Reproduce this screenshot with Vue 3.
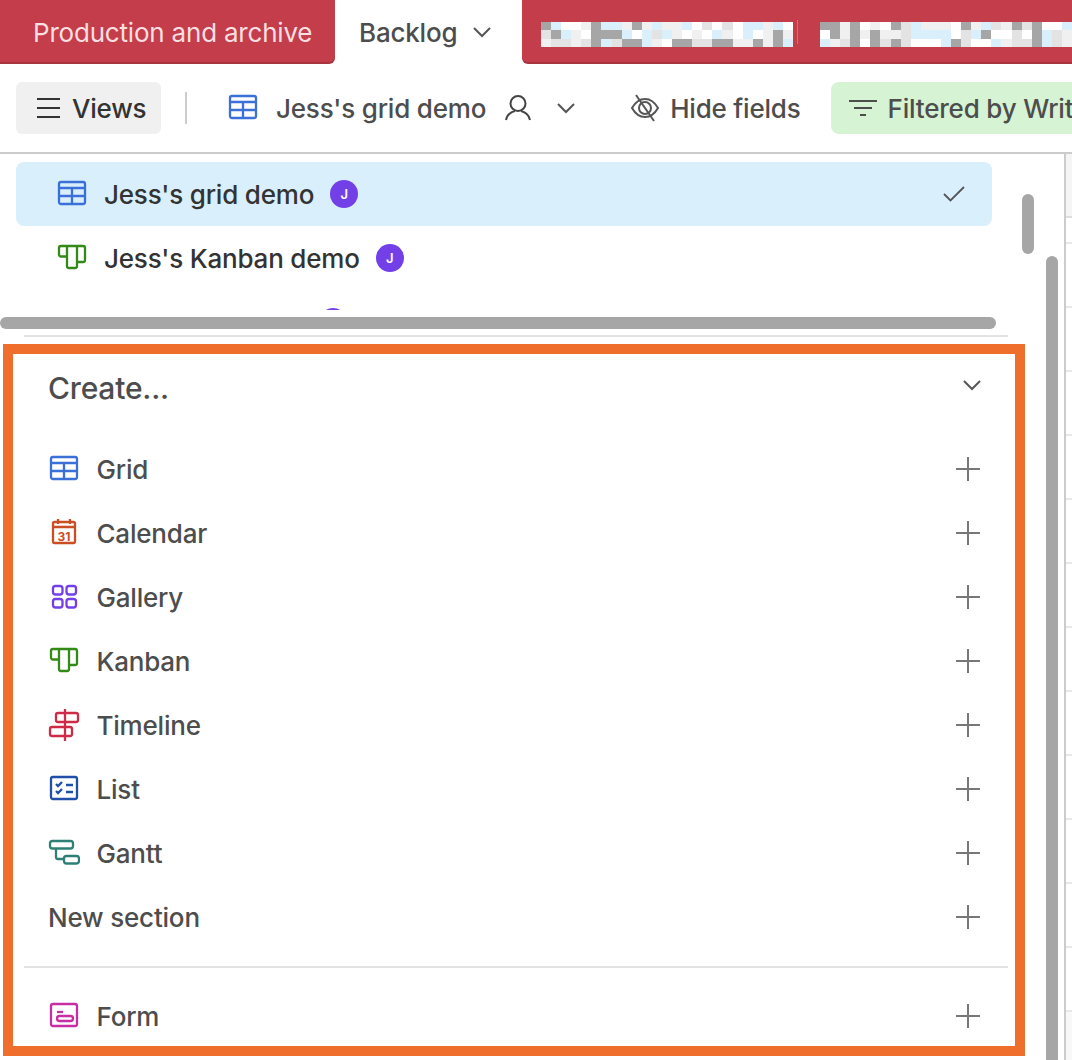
<script setup>
const blocks = [
  ['gbwwlgbblglbllbwmwmwbblbw', 'mgblwgggbwbmblwlwblwbwlgl', 'lmmlmgbmggblwggmmggllglgb'],
  ['gglgwlwgmblllwglbmlgmgwwb', 'wglglgllmbbbbwmbgwwmwgbml', 'blmgwgmgmwwwbgmwwblmmgbml'],
]

const views = [
  { name: "Jess's grid demo", icon: 'grid', color: '#3b70d8', selected: true },
  { name: "Jess's Kanban demo", icon: 'kanban', color: '#338a17' },
]

const createItems = [
  { name: 'Grid', icon: 'grid', color: '#3b70d8' },
  { name: 'Calendar', icon: 'calendar', color: '#cb4d24' },
  { name: 'Gallery', icon: 'gallery', color: '#7340e8' },
  { name: 'Kanban', icon: 'kanban', color: '#338a17' },
  { name: 'Timeline', icon: 'timeline', color: '#cf2a46' },
  { name: 'List', icon: 'list', color: '#1f4fa8' },
  { name: 'Gantt', icon: 'gantt', color: '#2e8077' },
  { name: 'New section' },
]

const gridRows = 12
</script>

<template>
  <div class="page">
    <svg class="sprites" aria-hidden="true">
      <symbol id="i-grid" viewBox="0 0 32 32">
        <g fill="none" stroke="currentColor" stroke-width="2.3">
          <rect x="3" y="4" width="26" height="22" rx="2" />
          <path d="M3 10H29M3 18H29M16 10V26" />
        </g>
      </symbol>
      <symbol id="i-calendar" viewBox="0 0 32 32">
        <g fill="none" stroke="currentColor" stroke-width="2.3">
          <rect x="5" y="5" width="22" height="21" rx="1.5" />
          <path d="M5 10H27M10 2V7M22 2V7" />
        </g>
      </symbol>
      <symbol id="i-gallery" viewBox="0 0 32 32">
        <g fill="none" stroke="currentColor" stroke-width="2.3">
          <rect x="5" y="5" width="9.5" height="8.5" rx="2.5" />
          <rect x="18.5" y="5" width="9.5" height="8.5" rx="2.5" />
          <rect x="5" y="18" width="9.5" height="8.5" rx="2.5" />
          <rect x="18.5" y="18" width="9.5" height="8.5" rx="2.5" />
        </g>
      </symbol>
      <symbol id="i-kanban" viewBox="0 0 32 32">
        <path
          fill="none"
          stroke="currentColor"
          stroke-width="2.3"
          d="M5 4H27a2 2 0 0 1 2 2V18a2 2 0 0 1-2 2H21M21 4V24a2 2 0 0 1-2 2H13a2 2 0 0 1-2-2V4M11 14.5H5a2 2 0 0 1-2-2V6a2 2 0 0 1 2-2"
        />
      </symbol>
      <symbol id="i-timeline" viewBox="0 0 32 32">
        <g fill="none" stroke="currentColor" stroke-width="2.3">
          <rect x="8" y="4" width="22" height="9" rx="2" />
          <rect x="2" y="18" width="22" height="9" rx="2" />
          <path d="M17 0V32" />
        </g>
      </symbol>
      <symbol id="i-list" viewBox="0 0 32 32">
        <g fill="none" stroke="currentColor" stroke-width="2.3">
          <rect x="3" y="4" width="26" height="22" rx="2" />
          <path d="M8 11l2 2 4-4M8 18l2 2 4-4M18 12H25M18 19H25" />
        </g>
      </symbol>
      <symbol id="i-gantt" viewBox="0 0 32 32">
        <g fill="none" stroke="currentColor" stroke-width="2.3">
          <rect x="2" y="4" width="23" height="7.5" rx="2.5" />
          <rect x="16" y="19" width="15" height="7.5" rx="2.5" />
          <path d="M8 12V20a2 2 0 0 0 2 2H16" />
        </g>
      </symbol>
      <symbol id="i-form" viewBox="0 0 32 32">
        <g fill="none" stroke="currentColor" stroke-width="2.3">
          <rect x="3" y="4" width="26" height="22" rx="2" />
          <path d="M9 12H15" />
          <rect x="9" y="16" width="16" height="5" rx="2.5" />
        </g>
      </symbol>
      <symbol id="i-chevron" viewBox="0 0 20 20">
        <path fill="none" stroke="currentColor" stroke-width="2" d="M2 6L10 14L18 6" />
      </symbol>
      <symbol id="i-plus" viewBox="0 0 24 24">
        <path fill="none" stroke="currentColor" stroke-width="2" d="M12 0V24M0 12H24" />
      </symbol>
    </svg>

    <header class="tabs">
      <div class="tabs-left">
        <span class="tab-name">Production and archive</span>
      </div>
      <div class="tab-active">
        <span>Backlog</span>
        <svg class="chevron"><use href="#i-chevron" /></svg>
      </div>
      <div class="tabs-right">
        <template v-for="(block, b) in blocks" :key="b">
          <div class="pixels">
            <template v-for="(row, r) in block" :key="r">
              <i v-for="(cell, c) in row" :key="c" :class="'px-' + cell"></i>
            </template>
          </div>
          <div v-if="b === 0" class="tab-sep"></div>
        </template>
      </div>
    </header>

    <div class="toolbar">
      <button class="views-btn">
        <svg class="menu-icon" viewBox="0 0 24 20">
          <path fill="none" stroke="currentColor" stroke-width="2" d="M1 1H24M1 10H24M1 19H24" />
        </svg>
        Views
      </button>
      <div class="divider"></div>
      <svg class="icon view-icon"><use href="#i-grid" /></svg>
      <span class="view-title">Jess's grid demo</span>
      <svg class="icon person" viewBox="0 0 32 32">
        <g fill="none" stroke="currentColor" stroke-width="2">
          <circle cx="16" cy="11.5" r="7.5" />
          <path d="M4 28c1-5 5-8 9-9M28 28c-1-5-5-8-9-9" />
        </g>
      </svg>
      <svg class="chevron toolbar-chevron"><use href="#i-chevron" /></svg>
      <svg class="icon hide-icon" viewBox="0 0 32 32">
        <g fill="none" stroke="currentColor" stroke-width="2">
          <path d="M3 16C7 9 11 7 16 7s9 2 13 9c-4 7-8 9-13 9s-9-2-13-9z" />
          <circle cx="16" cy="16" r="6" />
          <path d="M7 3L25 29" />
        </g>
      </svg>
      <span class="hide-label">Hide fields</span>
      <div class="filter-btn">
        <svg class="icon filter-icon" viewBox="0 0 32 32">
          <path fill="none" stroke="currentColor" stroke-width="2" d="M2 9H30M7 16H25M13 23H19" />
        </svg>
        Filtered by Writer
      </div>
    </div>

    <div class="body">
      <aside class="panel">
        <div class="view-list">
          <div v-for="view in views" :key="view.name" class="view-row" :class="{ selected: view.selected }">
            <svg class="icon" :style="{ color: view.color }"><use :href="'#i-' + view.icon" /></svg>
            <span class="view-name">{{ view.name }}</span>
            <span class="avatar">J</span>
            <svg v-if="view.selected" class="check" viewBox="0 0 22 16">
              <path fill="none" stroke="currentColor" stroke-width="1.8" d="M1 8L7.5 14.5L21 1" />
            </svg>
          </div>
          <div class="view-row clipped-row">
            <span class="avatar">J</span>
          </div>
        </div>

        <div class="sep top-sep"></div>

        <section class="create-box">
          <div class="create-head">
            <span class="create-title">Create...</span>
            <svg class="chevron"><use href="#i-chevron" /></svg>
          </div>
          <div v-for="item in createItems" :key="item.name" class="create-row">
            <svg v-if="item.icon" class="icon" viewBox="0 0 32 32" :style="{ color: item.color }">
              <use :href="'#i-' + item.icon" width="32" height="32" />
              <text v-if="item.icon === 'calendar'" x="16" y="23.5" class="cal-day" fill="currentColor" text-anchor="middle">31</text>
            </svg>
            <span class="create-name" :class="{ bare: !item.icon }">{{ item.name }}</span>
            <svg class="plus"><use href="#i-plus" /></svg>
          </div>
          <div class="sep box-sep"></div>
          <div class="create-row">
            <svg class="icon form-icon"><use href="#i-form" /></svg>
            <span class="create-name">Form</span>
            <svg class="plus"><use href="#i-plus" /></svg>
          </div>
        </section>
      </aside>

      <div class="grid-edge">
        <div class="grid-head"></div>
        <div class="grid-first"></div>
        <div v-for="n in gridRows" :key="n" class="grid-row"></div>
        <div class="grid-foot"></div>
      </div>

      <div class="scroll-h"></div>
      <div class="scroll-v-small"></div>
      <div class="scroll-v-big"></div>
    </div>
  </div>
</template>

<style>
html,
body {
  margin: 0;
  background: #fff;
}
</style>

<style scoped>
.page {
  position: relative;
  width: 1072px;
  height: 1060px;
  overflow: hidden;
  display: flex;
  flex-direction: column;
  background: #fff;
  font-family: Inter, "Liberation Sans", sans-serif;
  font-size: 26px;
  letter-spacing: -0.2px;
  color: #4d4d4d;
}

.sprites {
  position: absolute;
  width: 0;
  height: 0;
}

.cal-day {
  font-family: Inter, sans-serif;
  font-size: 12px;
  font-weight: 700;
  letter-spacing: 0;
}

.icon {
  width: 32px;
  height: 32px;
  flex-shrink: 0;
}

.chevron {
  width: 20px;
  height: 20px;
  flex-shrink: 0;
  color: #555;
}

.tabs {
  display: flex;
  height: 64px;
  flex-shrink: 0;
}

.tabs-left,
.tabs-right {
  background: #c43d4a;
  box-shadow: inset 0 -2px 0 rgba(0, 0, 0, 0.14);
  display: flex;
  align-items: center;
}

.tabs-left {
  width: 335px;
  padding-left: 33px;
  box-sizing: border-box;
  border-bottom-right-radius: 6px;
}

.tab-name {
  color: #f8dfe1;
}

.tab-active {
  width: 187px;
  padding-left: 24px;
  box-sizing: border-box;
  display: flex;
  align-items: center;
  gap: 15px;
  font-weight: 500;
  border-radius: 8px 8px 0 0;
}

.tabs-right {
  flex: 1;
  padding-left: 19px;
  padding-top: 5px;
  box-sizing: border-box;
  border-bottom-left-radius: 6px;
  overflow: hidden;
}

.pixels {
  width: 252px;
  height: 25px;
  flex-shrink: 0;
  display: grid;
  grid-template-columns: repeat(25, 1fr);
  grid-template-rows: repeat(3, 1fr);
}

.px-g { background: #a6a6a6; }
.px-w { background: #fff; }
.px-b { background: #d9effc; }
.px-l { background: #f0f0f0; }
.px-m { background: #e3e3e3; }

.tab-sep {
  width: 1px;
  height: 24px;
  margin: 0 22px 5px 4px;
  flex-shrink: 0;
  background: rgba(255, 255, 255, 0.25);
}

.toolbar {
  height: 90px;
  flex-shrink: 0;
  box-sizing: border-box;
  padding-left: 16px;
  display: flex;
  align-items: center;
  border-bottom: 2px solid #ccc;
  overflow: hidden;
  white-space: nowrap;
  font-weight: 500;
}

.views-btn {
  width: 145px;
  height: 52px;
  flex-shrink: 0;
  display: flex;
  align-items: center;
  gap: 12px;
  padding: 0 0 0 20px;
  border: 0;
  border-radius: 6px;
  background: #f0f0f0;
  color: #333;
  font: inherit;
  letter-spacing: inherit;
}

.menu-icon {
  width: 24px;
  height: 20px;
}

.divider {
  width: 2px;
  height: 32px;
  margin: 0 40px 0 24px;
  flex-shrink: 0;
  background: #ccc;
}

.view-icon {
  color: #3b70d8;
}

.view-title {
  margin-left: 17px;
}

.person {
  margin-left: 16px;
  color: #444;
}

.toolbar-chevron {
  margin-left: 22px;
}

.hide-icon {
  margin-left: 53px;
  color: #555;
}

.hide-label {
  margin-left: 9px;
}

.filter-btn {
  margin-left: 30px;
  height: 52px;
  flex-shrink: 0;
  display: flex;
  align-items: center;
  gap: 9px;
  padding: 0 40px 0 16px;
  border-radius: 8px;
  background: #d6f3d4;
}

.body {
  position: relative;
  flex: 1;
  display: flex;
  min-height: 0;
}

.panel {
  width: 1064px;
  flex-shrink: 0;
}

.view-list {
  height: 156px;
  box-sizing: border-box;
  padding: 8px 0 0 16px;
  overflow: hidden;
}

.view-row {
  width: 976px;
  height: 64px;
  box-sizing: border-box;
  padding: 0 27px 0 40px;
  display: flex;
  align-items: center;
  border-radius: 8px;
  color: #333;
  font-weight: 500;
}

.view-row.selected {
  background: #d9effc;
}

.view-name {
  margin-left: 16px;
}

.avatar {
  width: 28px;
  height: 28px;
  margin-left: 16px;
  flex-shrink: 0;
  display: flex;
  align-items: center;
  justify-content: center;
  border-radius: 50%;
  background: #7340e8;
  color: #fff;
  font-size: 13px;
  font-weight: 600;
}

.clipped-row .avatar {
  margin-left: 263px;
}

.check {
  width: 22px;
  height: 16px;
  margin-left: auto;
  color: #555;
}

.sep {
  height: 2px;
  background: #e3e3e3;
}

.top-sep {
  width: 984px;
  margin: 25px 0 7px 24px;
}

.create-box {
  width: 1022px;
  height: 712px;
  margin-left: 3px;
  box-sizing: border-box;
  border: 10px solid #f06e2c;
  overflow: hidden;
  font-weight: 500;
}

.create-head {
  height: 62px;
  margin-bottom: 21px;
  padding: 0 33px 0 35px;
  display: flex;
  align-items: center;
  justify-content: space-between;
}

.create-title {
  margin-top: 5px;
  font-size: 30px;
}

.create-row {
  height: 64px;
  padding: 0 35px;
  display: flex;
  align-items: center;
}

.create-name {
  margin-left: 16.5px;
}

.create-name.bare {
  margin-left: 0;
}

.plus {
  width: 24px;
  height: 24px;
  margin-left: auto;
  color: #777;
}

.box-sep {
  margin: 17px 7px 16px 11px;
}

.form-icon {
  color: #c72ea4;
}

.grid-edge {
  flex: 1;
  border-left: 2px solid #ccc;
}

.grid-head {
  height: 62px;
  background: #f5f5f5;
  border-bottom: 2px solid #ddd;
}

.grid-first {
  height: 24px;
  border-bottom: 2px solid #e8e8e8;
}

.grid-row {
  height: 62px;
  border-bottom: 2px solid #e8e8e8;
}

.grid-row:last-of-type {
  border-bottom-color: #ddd;
}

.grid-foot {
  height: 60px;
  background: #f8f8f8;
}

.scroll-h,
.scroll-v-small,
.scroll-v-big {
  position: absolute;
  background: #a6a6a6;
  border-radius: 6px;
}

.scroll-h {
  left: 0;
  top: 163px;
  width: 996px;
  height: 12px;
}

.scroll-v-small {
  left: 1022px;
  top: 40px;
  width: 12px;
  height: 60px;
}

.scroll-v-big {
  left: 1046px;
  top: 102px;
  width: 12px;
  height: 820px;
}
</style>
